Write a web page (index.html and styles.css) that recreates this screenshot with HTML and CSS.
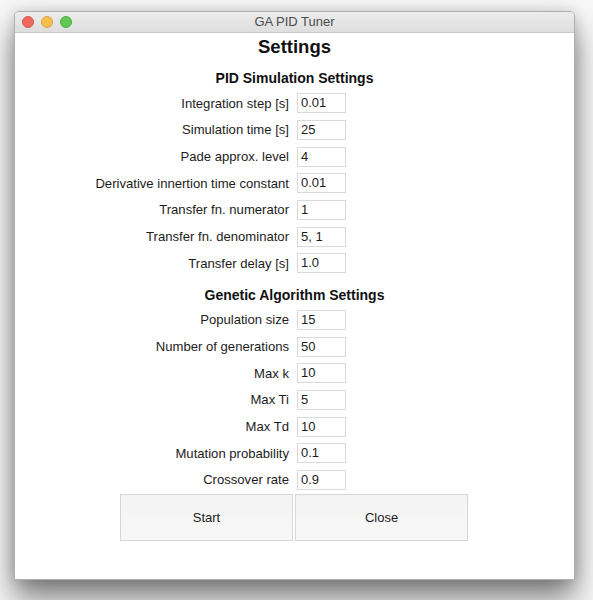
FILE: index.html
```html
<!DOCTYPE html>
<html>
<head>
<meta charset="utf-8">
<link rel="stylesheet" href="styles.css">
</head>
<body>
<div class="window">
  <div class="titlebar">
    <div class="lights">
      <span class="light red"></span>
      <span class="light yellow"></span>
      <span class="light green"></span>
    </div>
    <div class="title">GA PID Tuner</div>
  </div>
  <div class="content">
    <h1 class="heading">Settings</h1>
    <h2 class="section pid">PID Simulation Settings</h2>
    <div class="form">
      <label class="lbl">Integration step [s]</label><div class="entry">0.01</div>
      <label class="lbl">Simulation time [s]</label><div class="entry">25</div>
      <label class="lbl">Pade approx. level</label><div class="entry">4</div>
      <label class="lbl">Derivative innertion time constant</label><div class="entry">0.01</div>
      <label class="lbl">Transfer fn. numerator</label><div class="entry">1</div>
      <label class="lbl">Transfer fn. denominator</label><div class="entry">5, 1</div>
      <label class="lbl">Transfer delay [s]</label><div class="entry">1.0</div>
    </div>
    <h2 class="section ga">Genetic Algorithm Settings</h2>
    <div class="form">
      <label class="lbl">Population size</label><div class="entry">15</div>
      <label class="lbl">Number of generations</label><div class="entry">50</div>
      <label class="lbl">Max k</label><div class="entry">10</div>
      <label class="lbl">Max Ti</label><div class="entry">5</div>
      <label class="lbl">Max Td</label><div class="entry">10</div>
      <label class="lbl">Mutation probability</label><div class="entry">0.1</div>
      <label class="lbl">Crossover rate</label><div class="entry">0.9</div>
    </div>
    <div class="buttons">
      <div class="btn">Start</div>
      <div class="btn">Close</div>
    </div>
  </div>
</div>
</body>
</html>
```

FILE: styles.css
```css
html, body {
  margin: 0;
  padding: 0;
}
body {
  width: 593px;
  height: 600px;
  overflow: hidden;
  background: #f7f7f7;
  font-family: "Liberation Sans", Arial, sans-serif;
  color: #1c1c1c;
}
.window {
  box-sizing: border-box;
  margin: 11px 0 0 14px;
  width: 561px;
  height: 569px;
  background: #ffffff;
  border: 1px solid #b0b0b0;
  border-radius: 5px 5px 0 0;
  box-shadow: 0 18px 30px rgba(0, 0, 0, 0.5), 0 0 14px rgba(0, 0, 0, 0.14);
}
.titlebar {
  position: relative;
  height: 20px;
  border-bottom: 1px solid #c9c9c9;
  background: linear-gradient(#ececec, #dedede);
  border-radius: 4px 4px 0 0;
  display: flex;
  align-items: center;
  justify-content: center;
}
.lights {
  position: absolute;
  left: 7px;
  top: 4px;
  display: flex;
  gap: 7px;
}
.light {
  box-sizing: border-box;
  width: 12px;
  height: 12px;
  border-radius: 50%;
}
.red { background: #ee6a5f; border: 1px solid #d9574c; }
.yellow { background: #f6be4f; border: 1px solid #dea53a; }
.green { background: #62c655; border: 1px solid #4cae41; }
.title {
  font-size: 13px;
  color: #4b4b4b;
  line-height: 20px;
}
.content {
  padding-top: 3px;
}
.heading {
  margin: 0;
  font-size: 18.5px;
  line-height: 22px;
  font-weight: bold;
  text-align: center;
  color: #111;
}
.section {
  margin: 0;
  font-size: 14px;
  line-height: 18px;
  font-weight: bold;
  text-align: center;
  color: #111;
}
.section.pid {
  margin-top: 11px;
  margin-bottom: 3px;
}
.section.ga {
  margin-top: 9px;
  margin-bottom: 3px;
}
.form {
  display: grid;
  grid-template-columns: 274px 49px;
  grid-auto-rows: 26.67px;
  column-gap: 8px;
  align-items: center;
}
.lbl {
  font-size: 13.1px;
  text-align: right;
  white-space: nowrap;
  color: #1c1c1c;
}
.entry {
  box-sizing: border-box;
  height: 20px;
  border: 1px solid #d9d9d9;
  background: #fff;
  font-size: 13px;
  line-height: 18px;
  padding-left: 3px;
  color: #1c1c1c;
}
.buttons {
  display: flex;
  gap: 2px;
  padding-left: 105px;
  margin-top: 1px;
}
.btn {
  box-sizing: border-box;
  width: 173px;
  height: 47px;
  border: 1px solid #d6d6d6;
  background: linear-gradient(#f3f3f3, #f8f8f8);
  display: flex;
  align-items: center;
  justify-content: center;
  font-size: 13px;
  color: #1c1c1c;
}
```
